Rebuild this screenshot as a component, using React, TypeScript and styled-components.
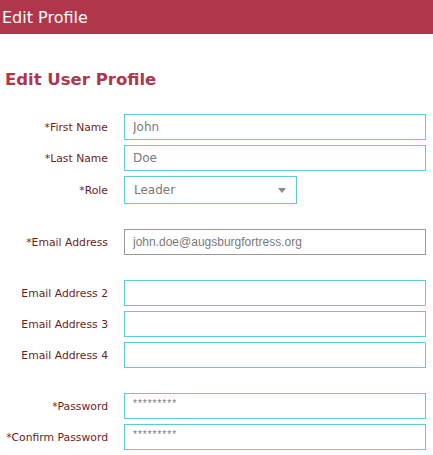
import React from "react";
import styled, { createGlobalStyle } from "styled-components";

const Global = createGlobalStyle`
  html, body { margin: 0; padding: 0; background: #fff; }
  body { font-family: "DejaVu Sans", "Liberation Sans", sans-serif; }
`;

const Header = styled.header`
  height: 34px;
  background: #b0374b;
  color: #fff;
  display: flex;
  align-items: center;
  padding: 0 0 0 2px;
  font-family: "DejaVu Sans", sans-serif;
  font-size: 16px;
`;

const Title = styled.h1`
  margin: 36px 0 0 5px;
  font-family: "DejaVu Sans", sans-serif;
  font-size: 16.5px;
  font-weight: bold;
  color: #b0374b;
  line-height: 20px;
`;

const Form = styled.form`
  display: flex;
  flex-direction: column;
  gap: 25px;
  margin-top: 24px;
`;

const Group = styled.div`
  display: flex;
  flex-direction: column;
  gap: 5px;
`;

const Row = styled.div`
  display: grid;
  grid-template-columns: 108px 302px;
  column-gap: 16px;
  align-items: center;
`;

const Label = styled.label`
  text-align: right;
  font-size: 10.8px;
  color: #6e1d1d;
  white-space: nowrap;
`;

const Input = styled.input<{ $locked?: boolean; $mono?: boolean }>`
  box-sizing: border-box;
  height: 26px;
  width: 302px;
  margin: 0;
  padding: 0 8px;
  border: 1px solid ${(p) => (p.$locked ? "#9a9a9a" : "#5ccade")};
  outline: none;
  background: #fff;
  color: #7a7a7a;
  font-family: ${(p) => (p.$mono ? '"Liberation Sans", sans-serif' : '"DejaVu Sans", sans-serif')};
  font-size: 12px;
`;

const Password = styled(Input)`
  font-size: 10px;
  letter-spacing: 1px;
  padding-bottom: 6px;
`;

const SelectBox = styled.div`
  box-sizing: border-box;
  height: 28px;
  width: 173px;
  border: 1px solid #5ccade;
  display: flex;
  align-items: center;
  justify-content: space-between;
  padding: 0 9px 0 9px;
  color: #7a7a7a;
  font-size: 12px;
`;

const Caret = styled.span`
  width: 0;
  height: 0;
  border-left: 4px solid transparent;
  border-right: 4px solid transparent;
  border-top: 5px solid #8c8c8c;
  margin-right: 1px;
`;

export default function App() {
  return (
    <>
      <Global />
      <Header>Edit Profile</Header>
      <Title>Edit User Profile</Title>
      <Form>
        <Group>
          <Row>
            <Label>*First Name</Label>
            <Input defaultValue="John" />
          </Row>
          <Row>
            <Label>*Last Name</Label>
            <Input defaultValue="Doe" />
          </Row>
          <Row>
            <Label>*Role</Label>
            <SelectBox>
              <span>Leader</span>
              <Caret />
            </SelectBox>
          </Row>
        </Group>
        <Group>
          <Row>
            <Label>*Email Address</Label>
            <Input $locked $mono defaultValue="john.doe@augsburgfortress.org" />
          </Row>
        </Group>
        <Group>
          <Row>
            <Label>Email Address 2</Label>
            <Input />
          </Row>
          <Row>
            <Label>Email Address 3</Label>
            <Input />
          </Row>
          <Row>
            <Label>Email Address 4</Label>
            <Input />
          </Row>
        </Group>
        <Group>
          <Row>
            <Label>*Password</Label>
            <Password $mono defaultValue="*********" />
          </Row>
          <Row>
            <Label>*Confirm Password</Label>
            <Password $mono defaultValue="*********" />
          </Row>
        </Group>
      </Form>
    </>
  );
}
